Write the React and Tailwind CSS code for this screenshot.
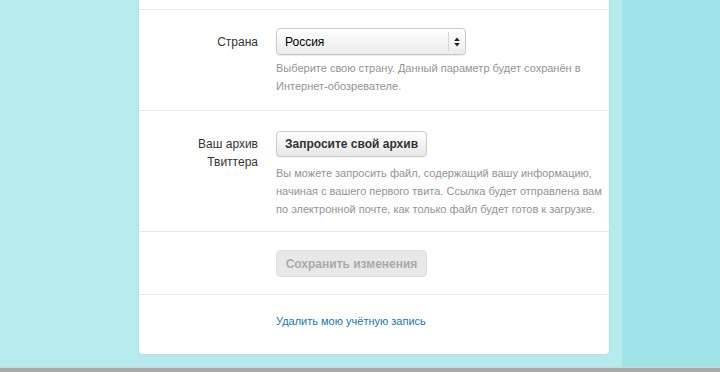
const font = { fontFamily: '"Liberation Sans", Arial, sans-serif' }

function Row({ label, children, className = '' }) {
  return (
    <div className={`flex border-b border-[#e8e8e8] ${className}`}>
      <div className="w-[119px] shrink-0 text-right text-[12px] leading-[18px] text-[#333]">{label}</div>
      <div className="ml-[18px] flex flex-col items-start">{children}</div>
    </div>
  )
}

export default function App() {
  return (
    <div className="h-[372px] w-[720px] flex flex-col bg-[#b6eaec] overflow-hidden" style={font}>
      <div className="flex flex-1">
        <div className="w-[139px] shrink-0" />
        <div className="w-[470px] shrink-0 self-start bg-white rounded-b-[4px] shadow-[0_0_2px_rgba(0,0,0,0.12)]">
          <div className="h-[10px] border-b border-[#e8e8e8]" />

          <Row label={<div className="mt-[5px]">Страна</div>} className="pt-[18px] pb-[15px]">
            <div className="relative w-[190px] h-[27px] rounded-[4px] border border-[#c8c8c8] bg-gradient-to-b from-white to-[#ececec] shadow-[0_1px_1px_rgba(0,0,0,0.08)] flex items-center">
              <span className="pl-[8px] text-[12px] text-black">Россия</span>
              <div className="absolute right-0 top-[3px] bottom-[3px] w-[17px] border-l border-[#d6d6d6] flex flex-col items-center justify-center">
                <svg width="6" height="10" viewBox="0 0 6 10">
                  <path d="M3 0.5L5.8 4H0.2z M3 9.5L5.8 6H0.2z" fill="#222" />
                </svg>
              </div>
            </div>
            <p className="mt-[4px] whitespace-nowrap text-[11px] leading-[18px] text-[#939393]">
              Выберите свою страну. Данный параметр будет сохранён в<br />Интернет-обозревателе.
            </p>
          </Row>

          <Row label={<div className="mt-[4px]">Ваш архив<br />Твиттера</div>} className="pt-[20px] pb-[13px]">
            <button className="w-[151px] h-[26px] rounded-[4px] border border-[#cccccc] bg-gradient-to-b from-white to-[#e6e6e6] shadow-[0_1px_1px_rgba(0,0,0,0.06)] text-[12px] font-bold text-[#333]">
              Запросите свой архив
            </button>
            <p className="mt-[7px] whitespace-nowrap text-[11px] leading-[18px] text-[#939393]">
              Вы можете запросить файл, содержащий вашу информацию,<br />
              начиная с вашего первого твита. Ссылка будет отправлена вам<br />
              по электронной почте, как только файл будет готов к загрузке.
            </p>
          </Row>

          <Row label="" className="pt-[18px] pb-[17px]">
            <button className="w-[151px] h-[27px] rounded-[4px] border border-[#e0e0e0] bg-[#e8e8e8] text-[12px] font-bold text-[#aaa]">
              Сохранить изменения
            </button>
          </Row>

          <div className="flex pt-[17px] pb-[24px]">
            <div className="w-[119px] shrink-0" />
            <a className="ml-[18px] text-[11px] leading-[18px] text-[#1c76a8]">Удалить мою учётную запись</a>
          </div>
        </div>
        <div className="w-[13px] shrink-0" />
        <div className="flex-1 bg-[#9fe3e8]" />
      </div>
      <div className="h-[1px] bg-[#d4d4d4]" />
      <div className="h-[4px] bg-[#a9a9a9]" />
    </div>
  )
}
